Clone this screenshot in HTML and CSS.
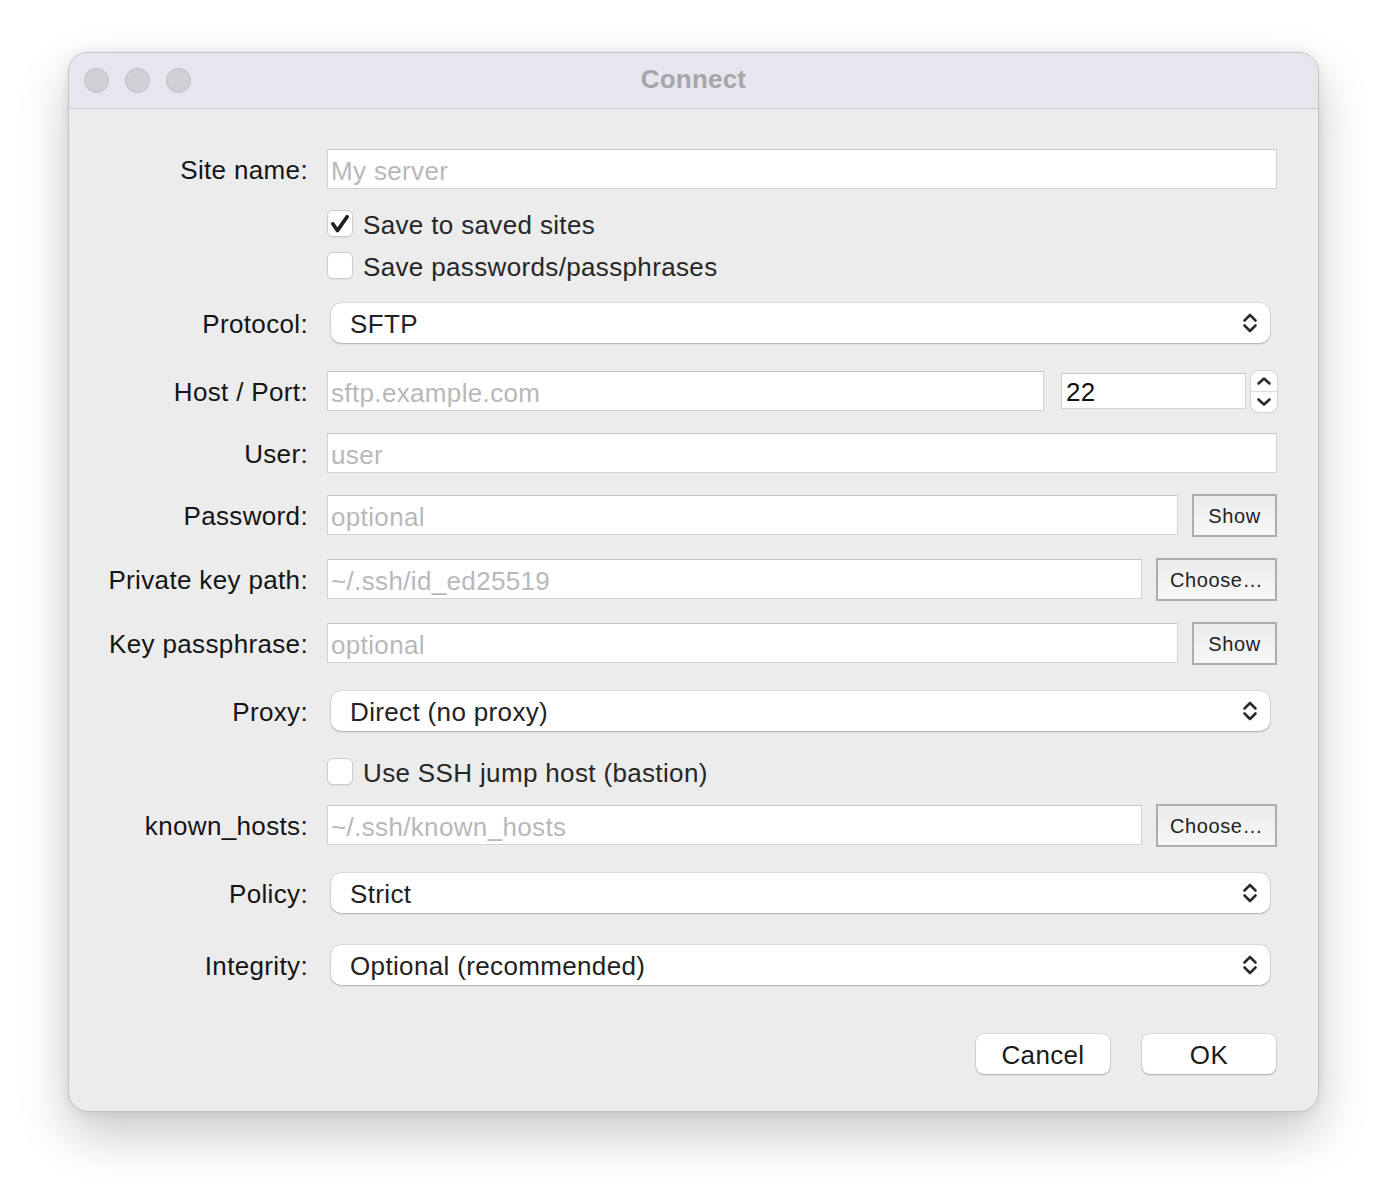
FILE: index.html
```html
<!DOCTYPE html>
<html>
<head>
<meta charset="utf-8">
<title>Connect</title>
<link rel="stylesheet" href="styles.css">
</head>
<body>
<div class="window">
  <div class="titlebar">
    <div class="lights">
      <span class="light"></span><span class="light"></span><span class="light"></span>
    </div>
    <div class="title">Connect</div>
    <div></div>
  </div>
  <div class="form">
    <div class="row r-site">
      <label class="lbl">Site name:</label>
      <div class="field"><input class="text" placeholder="My server"></div>
    </div>
    <div class="row r-cb1 short">
      <div></div>
      <div class="check"><span class="box on"><svg width="26" height="27" viewBox="0 0 26 27"><polyline points="5.8,13.8 10.4,20.6 20.2,6.6" fill="none" stroke="#1f1f1f" stroke-width="3.6" stroke-linecap="round" stroke-linejoin="round"/></svg></span><span class="ctext">Save to saved sites</span></div>
    </div>
    <div class="row r-cb2 short">
      <div></div>
      <div class="check"><span class="box"></span><span class="ctext">Save passwords/passphrases</span></div>
    </div>
    <div class="row r-protocol">
      <label class="lbl">Protocol:</label>
      <div class="select"><span>SFTP</span><svg class="chev" width="16" height="24" viewBox="0 0 16 24"><polyline points="2.5,9.5 8,4 13.5,9.5" fill="none" stroke="#2b2b2b" stroke-width="2.6" stroke-linecap="round" stroke-linejoin="round"/><polyline points="2.5,14.5 8,20 13.5,14.5" fill="none" stroke="#2b2b2b" stroke-width="2.6" stroke-linecap="round" stroke-linejoin="round"/></svg></div>
    </div>
    <div class="row r-host">
      <label class="lbl">Host / Port:</label>
      <div class="field">
        <input class="text host" placeholder="sftp.example.com">
        <input class="text port" value="22">
        <div class="stepper">
          <div class="step"><svg width="18" height="12" viewBox="0 0 18 12"><polyline points="3.5,8.5 9,3.5 14.5,8.5" fill="none" stroke="#2b2b2b" stroke-width="2.6" stroke-linecap="round" stroke-linejoin="round"/></svg></div>
          <div class="step down"><svg width="18" height="12" viewBox="0 0 18 12"><polyline points="3.5,3.5 9,8.5 14.5,3.5" fill="none" stroke="#2b2b2b" stroke-width="2.6" stroke-linecap="round" stroke-linejoin="round"/></svg></div>
        </div>
      </div>
    </div>
    <div class="row r-user">
      <label class="lbl">User:</label>
      <div class="field"><input class="text" placeholder="user"></div>
    </div>
    <div class="row r-pass">
      <label class="lbl">Password:</label>
      <div class="field"><input class="text" placeholder="optional"><button class="sq show">Show</button></div>
    </div>
    <div class="row r-key">
      <label class="lbl">Private key path:</label>
      <div class="field"><input class="text" placeholder="~/.ssh/id_ed25519"><button class="sq choose">Choose…</button></div>
    </div>
    <div class="row r-kpass">
      <label class="lbl">Key passphrase:</label>
      <div class="field"><input class="text" placeholder="optional"><button class="sq show">Show</button></div>
    </div>
    <div class="row r-proxy">
      <label class="lbl">Proxy:</label>
      <div class="select"><span>Direct (no proxy)</span><svg class="chev" width="16" height="24" viewBox="0 0 16 24"><polyline points="2.5,9.5 8,4 13.5,9.5" fill="none" stroke="#2b2b2b" stroke-width="2.6" stroke-linecap="round" stroke-linejoin="round"/><polyline points="2.5,14.5 8,20 13.5,14.5" fill="none" stroke="#2b2b2b" stroke-width="2.6" stroke-linecap="round" stroke-linejoin="round"/></svg></div>
    </div>
    <div class="row r-jump short">
      <div></div>
      <div class="check"><span class="box"></span><span class="ctext">Use SSH jump host (bastion)</span></div>
    </div>
    <div class="row r-known">
      <label class="lbl">known_hosts:</label>
      <div class="field"><input class="text" placeholder="~/.ssh/known_hosts"><button class="sq choose">Choose…</button></div>
    </div>
    <div class="row r-policy">
      <label class="lbl">Policy:</label>
      <div class="select"><span>Strict</span><svg class="chev" width="16" height="24" viewBox="0 0 16 24"><polyline points="2.5,9.5 8,4 13.5,9.5" fill="none" stroke="#2b2b2b" stroke-width="2.6" stroke-linecap="round" stroke-linejoin="round"/><polyline points="2.5,14.5 8,20 13.5,14.5" fill="none" stroke="#2b2b2b" stroke-width="2.6" stroke-linecap="round" stroke-linejoin="round"/></svg></div>
    </div>
    <div class="row r-integrity">
      <label class="lbl">Integrity:</label>
      <div class="select"><span>Optional (recommended)</span><svg class="chev" width="16" height="24" viewBox="0 0 16 24"><polyline points="2.5,9.5 8,4 13.5,9.5" fill="none" stroke="#2b2b2b" stroke-width="2.6" stroke-linecap="round" stroke-linejoin="round"/><polyline points="2.5,14.5 8,20 13.5,14.5" fill="none" stroke="#2b2b2b" stroke-width="2.6" stroke-linecap="round" stroke-linejoin="round"/></svg></div>
    </div>
    <div class="row r-buttons">
      <div></div>
      <div class="actions"><button class="push">Cancel</button><button class="push">OK</button></div>
    </div>
  </div>
</div>
</body>
</html>
```

FILE: styles.css
```css
* { box-sizing: border-box; }
html, body { margin: 0; padding: 0; background: #ffffff; }
body {
  font-family: "Liberation Sans", Arial, sans-serif;
  font-size: 26px;
  color: #1d1d1f;
  letter-spacing: 0.35px;
  min-height: 1196px;
  padding-top: 52px;
  padding-bottom: 60px;
}
.window {
  margin: 0 0 0 68px;
  width: 1251px;
  height: 1060px;
  background: #ececec;
  border: 1px solid #c3c3c3;
  border-radius: 20px;
  overflow: hidden;
  box-shadow: 0 22px 50px rgba(0,0,0,0.22), 0 0 12px rgba(0,0,0,0.08);
}
.titlebar {
  height: 56px;
  background: #e7e5ee;
  border-bottom: 1px solid #cbcacf;
  display: grid;
  grid-template-columns: 1fr auto 1fr;
  align-items: center;
}
.lights { display: flex; gap: 16px; padding-left: 15px; }
.light {
  width: 25px; height: 25px; border-radius: 50%;
  background: #d1d0d6;
  border: 1px solid #bdbcc2;
}
.title {
  font-weight: bold;
  color: #a6a5ab;
  font-size: 26px;
  letter-spacing: 0.2px;
  margin-top: -3px;
}
.form { padding-top: 40px; }
.row {
  display: grid;
  grid-template-columns: 239px 950px;
  column-gap: 19px;
  align-items: center;
  height: 40px;
}
.row.short { height: 27px; }
.r-cb1 { margin-top: 21px; }
.r-cb2 { margin-top: 15px; }
.r-protocol { margin-top: 24px; }
.r-host { margin-top: 28px; }
.r-user { margin-top: 22px; }
.r-pass { margin-top: 22px; }
.r-key { margin-top: 24px; }
.r-kpass { margin-top: 24px; }
.r-proxy { margin-top: 28px; }
.r-jump { margin-top: 27px; }
.r-known { margin-top: 20px; }
.r-policy { margin-top: 28px; }
.r-integrity { margin-top: 32px; }
.r-buttons { margin-top: 49px; }

.lbl { text-align: right; color: #141414; white-space: nowrap; padding-top: 3px; }
.field { display: flex; align-items: center; height: 40px; }
.text {
  flex: 1;
  min-width: 0;
  height: 40px;
  border: 1px solid #d2d2d2;
  border-top-color: #c6c6c6;
  background: #ffffff;
  font-family: "Liberation Sans", Arial, sans-serif;
  font-size: 26px;
  letter-spacing: 0.35px;
  color: #111;
  padding: 4px 3px 0;
  outline: none;
  margin: 0;
}
.text::placeholder { color: #b8b8b8; }
.host { flex: 0 0 717px; }
.port { flex: 0 0 185px; height: 36px; margin-left: 17px; padding-left: 4px; padding-top: 2px; }
.stepper {
  margin-left: 5px;
  width: 26px; height: 41px;
  background: #fff;
  border-radius: 8px;
  box-shadow: 0 0 0 1px #d4d4d4, 0 1px 1px rgba(0,0,0,0.12);
  display: flex; flex-direction: column;
}
.step { flex: 1; display: flex; align-items: center; justify-content: center; }
.step.down { border-top: 1px solid #dcdcdc; }

.sq {
  margin-left: 14px;
  height: 43px;
  border: 2px solid #adadad;
  background: linear-gradient(#ececec, #f7f7f7);
  font-family: "Liberation Sans", Arial, sans-serif;
  font-size: 20px;
  letter-spacing: 0.6px;
  color: #222;
  padding: 2px 0 0;
  flex: none;
}
.show { width: 85px; }
.choose { width: 121px; }

.select {
  margin-left: 4px;
  margin-right: 7px;
  height: 40px;
  background: #fff;
  border-radius: 10px;
  box-shadow: 0 0 0 0.5px rgba(0,0,0,0.12), 0 1px 2px rgba(0,0,0,0.22);
  display: flex;
  align-items: center;
  justify-content: space-between;
  padding: 0 12px 0 19px;
  color: #222;
}
.select span { padding-top: 2px; }

.check { display: flex; align-items: center; gap: 10px; color: #262626; height: 27px; }
.ctext { padding-top: 3px; }
.box {
  width: 26px; height: 27px;
  background: #fff;
  border: 1px solid #cbcbcb;
  border-radius: 6px;
  box-shadow: 0 1px 1px rgba(0,0,0,0.06);
  display: block;
  flex: none;
}
.box svg { display: block; margin: -1px 0 0 -1px; }

.actions { display: flex; justify-content: flex-end; gap: 32px; padding-right: 1px; }
.push {
  width: 134px; height: 40px;
  background: #fff;
  border: none;
  border-radius: 8px;
  box-shadow: 0 0 0 0.5px rgba(0,0,0,0.12), 0 1px 2px rgba(0,0,0,0.25);
  font-family: "Liberation Sans", Arial, sans-serif;
  font-size: 26px;
  letter-spacing: 0.35px;
  color: #1a1a1a;
  padding: 2px 0 0;
}
```
